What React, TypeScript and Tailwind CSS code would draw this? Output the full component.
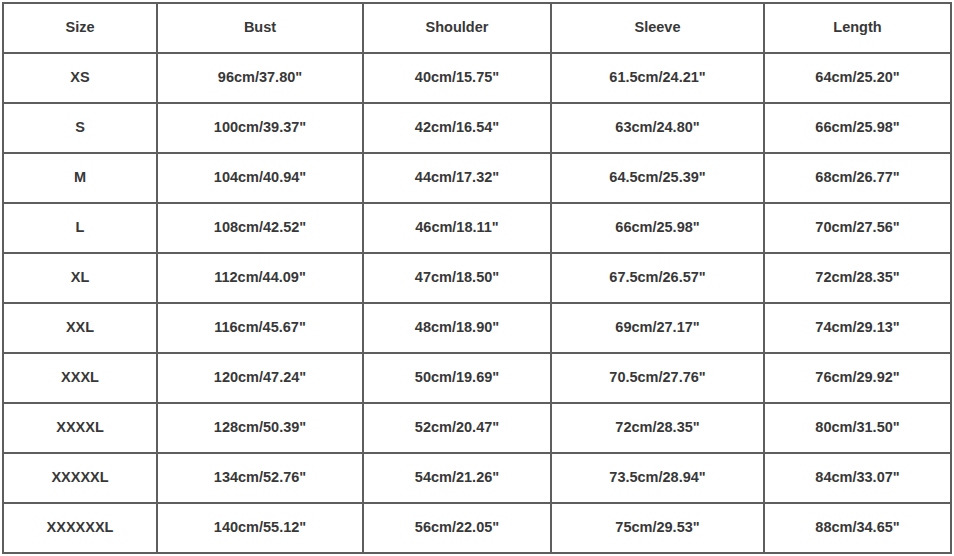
import React from 'react';

const headers = ['Size', 'Bust', 'Shoulder', 'Sleeve', 'Length'];

const rows: string[][] = [
  ['XS', '96cm/37.80"', '40cm/15.75"', '61.5cm/24.21"', '64cm/25.20"'],
  ['S', '100cm/39.37"', '42cm/16.54"', '63cm/24.80"', '66cm/25.98"'],
  ['M', '104cm/40.94"', '44cm/17.32"', '64.5cm/25.39"', '68cm/26.77"'],
  ['L', '108cm/42.52"', '46cm/18.11"', '66cm/25.98"', '70cm/27.56"'],
  ['XL', '112cm/44.09"', '47cm/18.50"', '67.5cm/26.57"', '72cm/28.35"'],
  ['XXL', '116cm/45.67"', '48cm/18.90"', '69cm/27.17"', '74cm/29.13"'],
  ['XXXL', '120cm/47.24"', '50cm/19.69"', '70.5cm/27.76"', '76cm/29.92"'],
  ['XXXXL', '128cm/50.39"', '52cm/20.47"', '72cm/28.35"', '80cm/31.50"'],
  ['XXXXXL', '134cm/52.76"', '54cm/21.26"', '73.5cm/28.94"', '84cm/33.07"'],
  ['XXXXXXL', '140cm/55.12"', '56cm/22.05"', '75cm/29.53"', '88cm/34.65"'],
];

const Cell: React.FC<{ children: React.ReactNode }> = ({ children }) => (
  <div className="bg-white h-[48px] pb-[2px] flex items-center justify-center">{children}</div>
);

export default function App() {
  return (
    <div className="w-[954px] h-[556px] bg-white pt-[2px] pl-[2px]">
      <div
        className="inline-grid grid-cols-[152px_204px_186px_211px_185px] gap-[2px] p-[2px] bg-[#5e5e5e] text-[14.5px] font-bold text-[#383838] leading-none"
        style={{ fontFamily: '"Liberation Sans", Arial, sans-serif' }}
      >
        {headers.map((h) => (
          <Cell key={h}>{h}</Cell>
        ))}
        {rows.map((row) =>
          row.map((value, i) => <Cell key={row[0] + i}>{value}</Cell>)
        )}
      </div>
    </div>
  );
}
